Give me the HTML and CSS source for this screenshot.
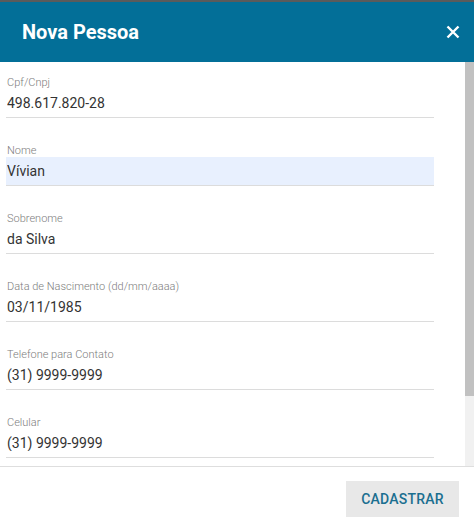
FILE: index.html
```html
<!DOCTYPE html>
<html lang="pt-BR">
<head>
  <meta charset="UTF-8">
  <meta name="viewport" content="width=device-width, initial-scale=1.0">
  <title>Nova Pessoa</title>
  <link rel="stylesheet" href="styles.css">
</head>
<body>
  <div class="dialog">
    <header class="dialog-header">
      <h1>Nova Pessoa</h1>
      <button class="close" type="button" aria-label="Fechar">
        <svg width="14" height="14" viewBox="0 0 14 14">
          <path d="M1.5 1.5 L12.5 12.5 M12.5 1.5 L1.5 12.5" stroke="#fff" stroke-width="2.4" fill="none"/>
        </svg>
      </button>
    </header>
    <div class="dialog-body">
      <form class="form">
        <div class="field">
          <label for="cpf">Cpf/Cnpj</label>
          <input id="cpf" type="text" value="498.617.820-28">
        </div>
        <div class="field">
          <label for="nome">Nome</label>
          <input id="nome" class="autofill" type="text" value="Vívian">
        </div>
        <div class="field">
          <label for="sobrenome">Sobrenome</label>
          <input id="sobrenome" type="text" value="da Silva">
        </div>
        <div class="field">
          <label for="nascimento">Data de Nascimento (dd/mm/aaaa)</label>
          <input id="nascimento" type="text" value="03/11/1985">
        </div>
        <div class="field">
          <label for="telefone">Telefone para Contato</label>
          <input id="telefone" type="text" value="(31) 9999-9999">
        </div>
        <div class="field">
          <label for="celular">Celular</label>
          <input id="celular" type="text" value="(31) 9999-9999">
        </div>
      </form>
      <!-- scrollbar drawn by hand, the headless browser hides the native one -->
      <div class="scrollbar">
        <div class="scrollbar-thumb"></div>
      </div>
    </div>
    <footer class="dialog-footer">
      <button class="btn" type="button">CADASTRAR</button>
    </footer>
  </div>
</body>
</html>
```

FILE: styles.css
```css
html, body {
  margin: 0;
  padding: 0;
}
body {
  font-family: Roboto, "Liberation Sans", Arial, sans-serif;
  background-color: #5b5b5b;
  color: #333;
  padding-top: 2px;
}
.dialog {
  display: flex;
  flex-direction: column;
  height: 524px;
  background: white;
}
.dialog-header {
  flex: none;
  height: 60px;
  display: flex;
  align-items: center;
  justify-content: space-between;
  background-color: #036f98;
  padding: 0 13px 0 22px;
}
.dialog-header h1 {
  margin: 0;
  color: white;
  font-size: 20px;
  font-weight: 700;
}
.close {
  border: 0;
  background: none;
  padding: 0;
  width: 16px;
  height: 16px;
  display: flex;
  align-items: center;
  justify-content: center;
  cursor: pointer;
}
.dialog-body {
  flex: 1;
  min-height: 0;
  display: flex;
  overflow: hidden;
}
.form {
  flex: 1;
  padding: 14px 31px 0 6px;
}
.scrollbar {
  flex: none;
  width: 9px;
  background: #f1f1f1;
}
.scrollbar-thumb {
  height: 334px;
  background: #c1c1c1;
}
.field {
  display: flex;
  flex-direction: column;
  margin-bottom: 26px;
}
.field label {
  font-size: 11px;
  line-height: 13px;
  font-weight: 300;
  color: #7d7d7d;
  padding-left: 1px;
}
.field input {
  height: 29px;
  box-sizing: border-box;
  border: 0;
  border-bottom: 1px solid #dcdcdc;
  padding: 0 1px;
  margin: 0;
  font-family: inherit;
  font-size: 14px;
  color: #333;
  background: transparent;
  outline: none;
}
.field input.autofill {
  background-color: #e8f0fe;
}
.dialog-footer {
  flex: none;
  height: 60px;
  box-sizing: border-box;
  border-top: 1px solid #dedede;
  display: flex;
  justify-content: flex-end;
  align-items: flex-start;
  padding: 14px 15px 0 0;
}
.btn {
  width: 113px;
  height: 36px;
  border: 0;
  background-color: #e8e8e8;
  color: #1b6f90;
  font-family: inherit;
  font-size: 14px;
  font-weight: 500;
  letter-spacing: 0.2px;
  cursor: pointer;
}
```
